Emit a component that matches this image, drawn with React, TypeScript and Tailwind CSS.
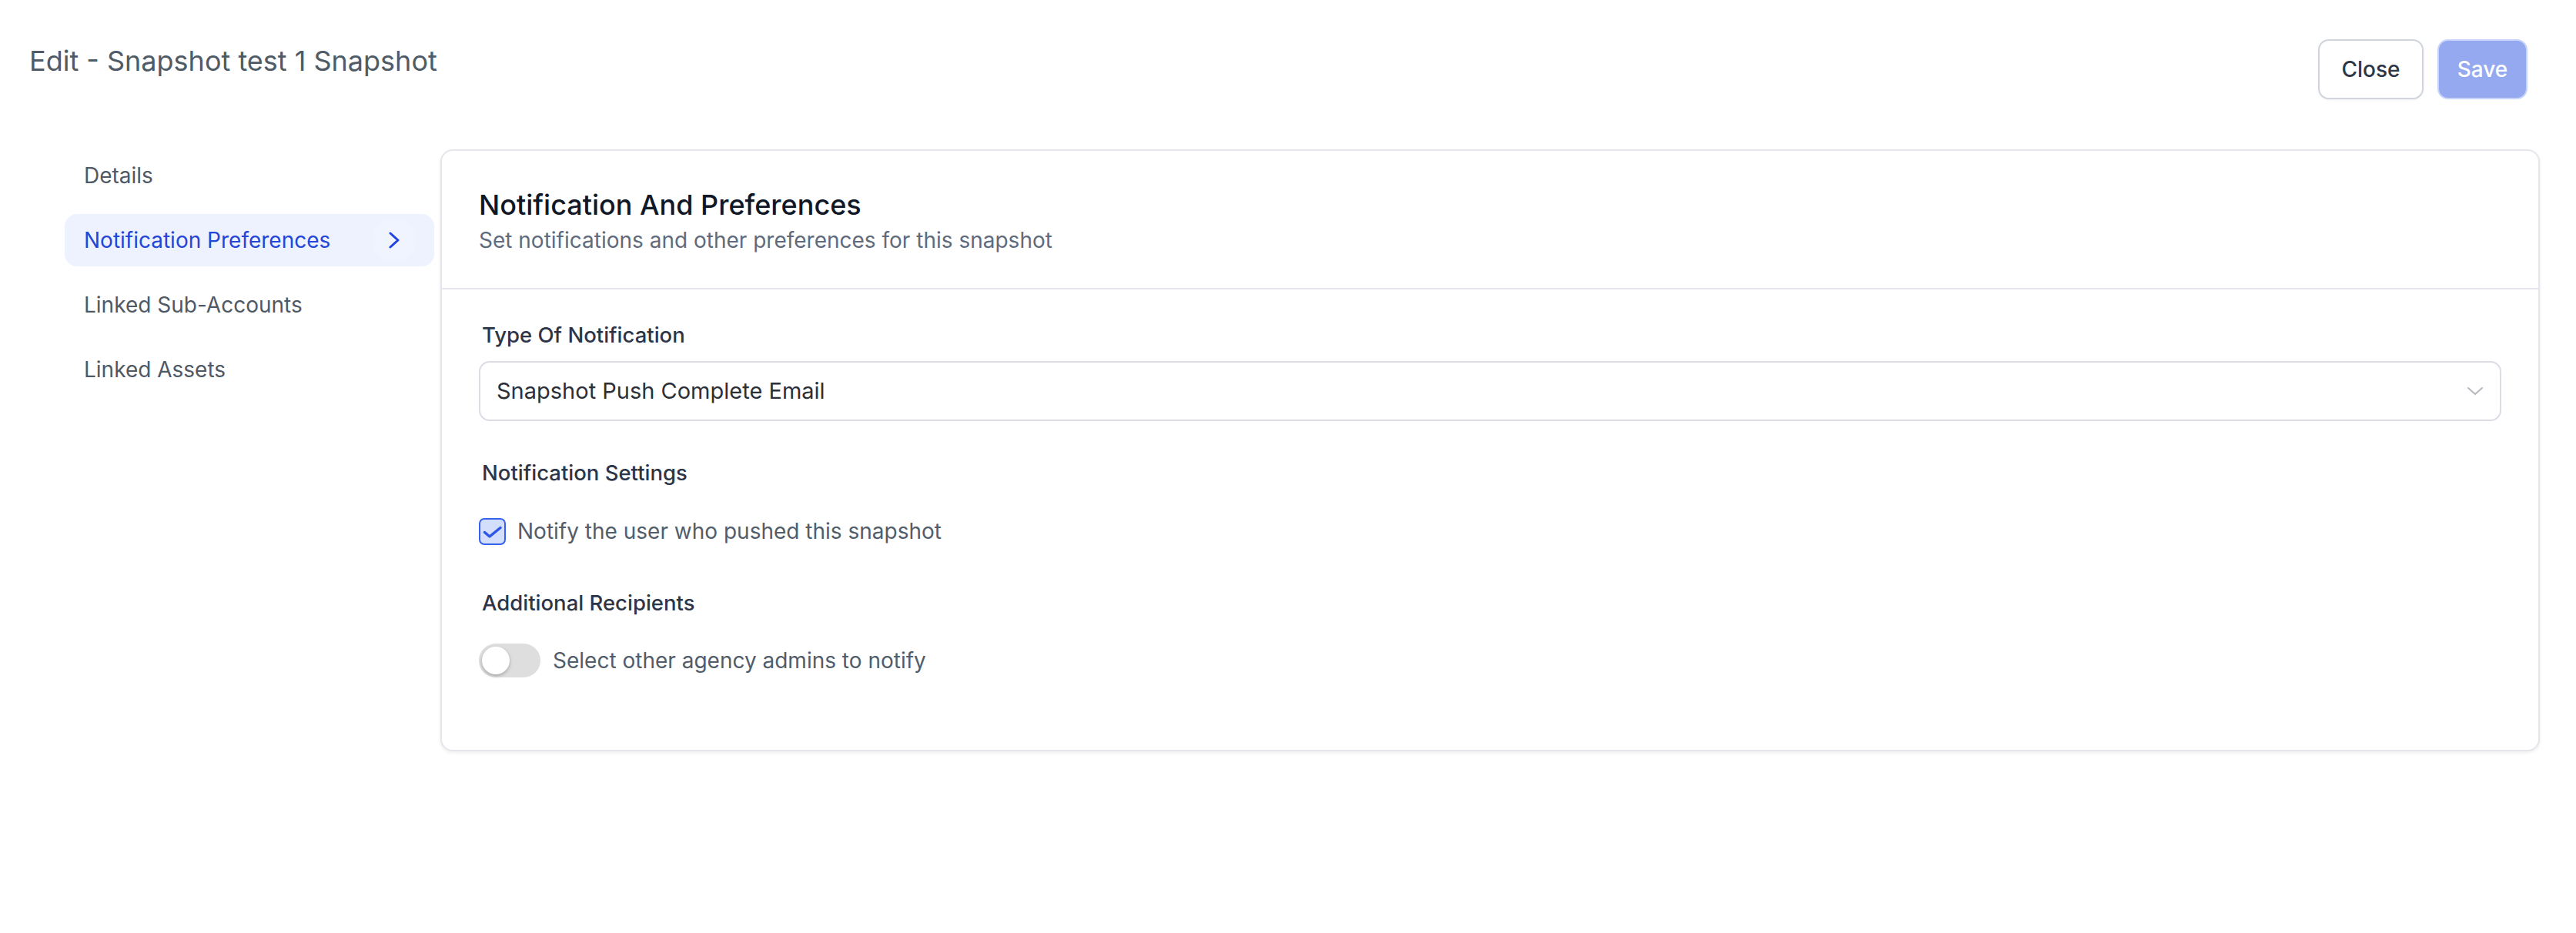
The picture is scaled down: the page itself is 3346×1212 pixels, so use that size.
import { useState } from "react";

const NAV = ["Details", "Notification Preferences", "Linked Sub-Accounts", "Linked Assets"];

function Chevron() {
  return (
    <svg width="16" height="24" viewBox="0 0 16 24" fill="none" stroke="#2343e0" strokeWidth={3} strokeLinecap="round" strokeLinejoin="round">
      <polyline points="3,3 13,12 3,21" />
    </svg>
  );
}

function Checkbox({ checked }: { checked: boolean }) {
  return (
    <span className={`flex h-[35px] w-[35px] shrink-0 items-center justify-center rounded-[7px] border-2 ${checked ? "border-[#3662f0] bg-[#d3defd]" : "border-[#d0d5dd] bg-white"}`}>
      {checked && (
        <svg className="h-full w-full" viewBox="0 0 31 31" fill="none" stroke="#2d55e6" strokeWidth={3.5} strokeLinecap="round" strokeLinejoin="round">
          <polyline points="5.5,16.5 12,22 26,10.5" />
        </svg>
      )}
    </span>
  );
}

function Toggle({ on }: { on: boolean }) {
  return (
    <span className={`flex h-[44px] w-[80px] shrink-0 items-center rounded-full px-[4px] ${on ? "justify-end bg-[#95a9f1]" : "justify-start bg-[#dedede]"}`}>
      <span className="h-[36px] w-[36px] rounded-full bg-white shadow-[0_2px_4px_rgba(0,0,0,0.25)]" />
    </span>
  );
}

export default function App() {
  const [active] = useState(1);
  const [notifyPusher] = useState(true);
  const [others] = useState(false);

  return (
    <div className="min-h-screen bg-white [font-family:Inter,'Noto_Sans',sans-serif]">
      {/* Top bar */}
      <div className="flex items-start justify-between pl-[38px] pr-[63px] pt-[51px]">
        <h1 className="mt-[6px] text-[36px] leading-[44px] font-normal text-[#4f5b67]">Edit - Snapshot test 1 Snapshot</h1>
        <div className="flex gap-[18px]">
          <button className="h-[78px] w-[137px] rounded-[14px] border-2 border-[#d0d5dd] bg-white text-[28px] font-medium text-[#2d3748] shadow-[0_1px_3px_rgba(16,24,40,0.06)]">Close</button>
          <button disabled className="h-[78px] w-[117px] rounded-[14px] border-2 border-[#c7d3fb] bg-[#95a9f1] text-[28px] font-medium text-white">Save</button>
        </div>
      </div>

      <div className="mt-[65px] flex items-start gap-[8px] pl-[84px] pr-[47px]">
        {/* Side nav */}
        <nav className="flex w-[480px] shrink-0 flex-col gap-[16px]">
          {NAV.map((n, i) => (
            <div key={n}
              className={`flex h-[68px] items-center justify-between rounded-[16px] pl-[25px] pr-[24px] text-[28px] ${i === active ? "bg-[#eef2fe] text-[#2345d8]" : "text-[#4f5965]"}`}>
              <span>{n}</span>
              {i === active && (
                <span className="flex h-[56px] w-[56px] items-center justify-center rounded-full bg-[#f0f4ff]"><Chevron /></span>
              )}
            </div>
          ))}
        </nav>

        {/* Panel */}
        <section className="flex-1 rounded-[16px] border-2 border-[#e5e6eb] bg-white shadow-[0_2px_4px_rgba(16,24,40,0.07)]">
          <div className="border-b-2 border-[#e5e6eb] px-[48px] pt-[50px] pb-[44px]">
            <h2 className="text-[36px] leading-[40px] font-medium text-[#101828]">Notification And Preferences</h2>
            <p className="mt-[8px] text-[28px] leading-[36px] text-[#5f6b7d]">Set notifications and other preferences for this snapshot</p>
          </div>

          <div className="px-[48px] pt-[41px] pb-[94px]">
            <div className="pl-[4px] text-[27.5px] leading-[36px] font-medium text-[#2d3648]">Type Of Notification</div>
            <div className="mt-[16px] flex h-[78px] items-center justify-between rounded-[14px] border-2 border-[#dcdde3] bg-white pl-[21px] pr-[22px]">
              <span className="text-[29px] text-[#2b2f38]">Snapshot Push Complete Email</span>
              <svg width="20" height="10" viewBox="0 0 20 10" fill="none" stroke="#b5b8bd" strokeWidth={2} strokeLinecap="round" strokeLinejoin="round">
                <polyline points="1,1 10,9 19,1" />
              </svg>
            </div>

            <div className="mt-[49px] pl-[4px] text-[27.5px] leading-[36px] font-medium text-[#2d3648]">Notification Settings</div>
            <label className="mt-[36px] flex h-[44px] items-center gap-[15px]">
              <Checkbox checked={notifyPusher} />
              <span className="text-[28px] leading-[44px] text-[#525d6b]">Notify the user who pushed this snapshot</span>
            </label>

            <div className="mt-[53px] pl-[4px] text-[27.5px] leading-[36px] font-medium text-[#2d3648]">Additional Recipients</div>
            <div className="mt-[35px] flex h-[44px] items-center gap-[16px]">
              <Toggle on={others} />
              <span className="text-[28px] leading-[44px] text-[#525d6b]">Select other agency admins to notify</span>
            </div>
          </div>
        </section>
      </div>
    </div>
  );
}
